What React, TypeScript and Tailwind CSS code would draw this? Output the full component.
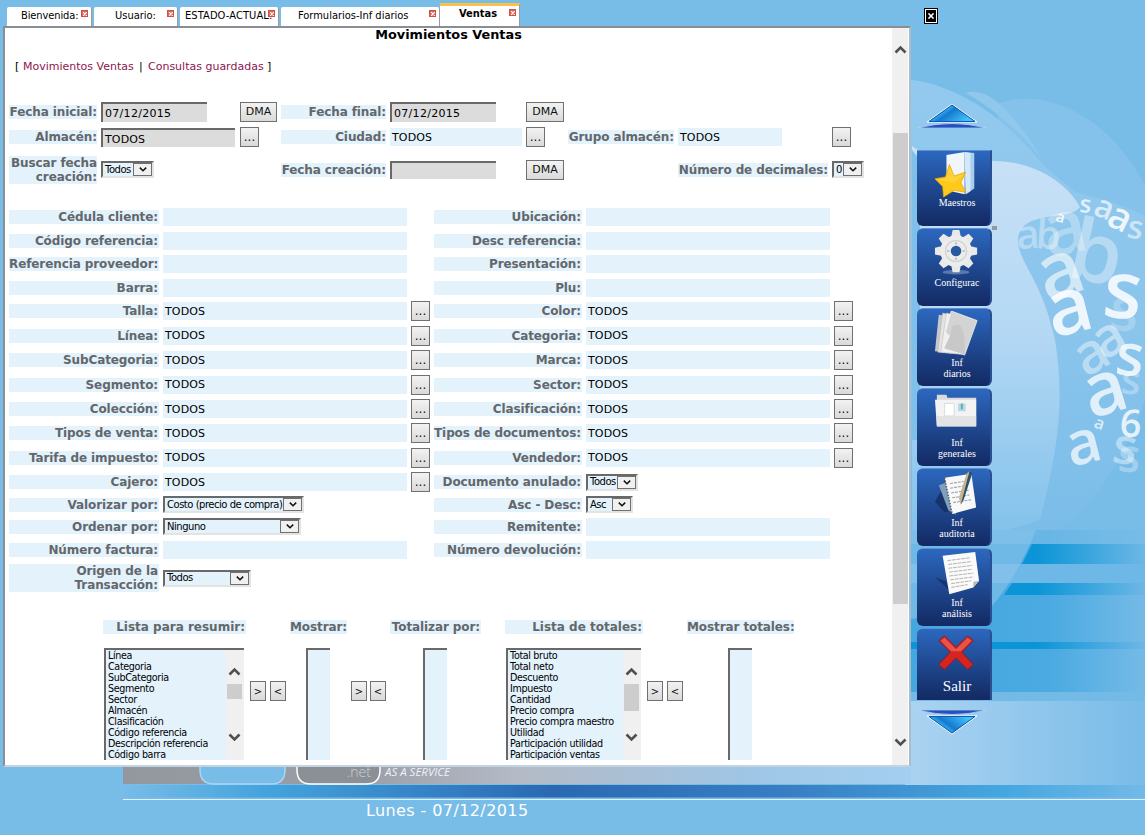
import React from "react";

const LABEL =
  "bg-[#e4f2fc] text-right text-[12px] leading-[14px] font-bold text-[#62676b] whitespace-pre shrink-0";
const FIELD = "bg-[#e4f2fc] text-[11px] tracking-[0.15px] pt-[2px] pl-[2px] text-black shrink-0 flex items-center";
const SUNKEN = "border-t-2 border-l-2 border-[#696969]";
const INPUT_TEXT = "bg-[#dcdcdc] pl-[2px] text-[11px] leading-[14px] shrink-0";

const Gap = ({ className }: { className: string }) => <div className={`shrink-0 ${className}`} />;

const Btn = ({ children, className }: { children: React.ReactNode; className: string }) => (
  <button
    className={`shrink-0 border border-[#707070] bg-linear-to-b from-[#f2f2f2] to-[#dadada] text-[#111] flex items-center justify-center ${className}`}
  >
    {children}
  </button>
);

const Dots = () => (
  <Btn className="h-[20px] w-[19px] text-[12px]">
    <span className="leading-[12px]">...</span>
  </Btn>
);
const Dma = ({ className }: { className: string }) => (
  <Btn className={`h-[20px] text-[11px] ${className}`}>
    <span className="leading-[12px]">DMA</span>
  </Btn>
);

const Chevron = ({ className, up }: { className: string; up?: boolean }) => (
  <svg className={className} viewBox="0 0 12 9" fill="none">
    <path d={up ? "M1 7.5 L6 2.5 L11 7.5" : "M1 1.5 L6 6.5 L11 1.5"} stroke="#505050" strokeWidth="2.6" />
  </svg>
);

const Select = ({ text, className }: { text: string; className: string }) => (
  <div
    className={`h-[17px] shrink-0 border-t-2 border-l-2 border-r-2 border-b-2 border-t-[#696969] border-l-[#696969] border-r-[#e3e3e3] border-b-[#e3e3e3] bg-[#e4f2fc] flex items-center justify-between ${className}`}
  >
    <span className="w-0 pl-[2px] text-[10px] leading-[12px] tracking-[-0.48px] whitespace-nowrap">{text}</span>
    <span className="flex h-[13px] w-[19px] shrink-0 items-center justify-center border border-[#707070] bg-[#f0f0f0]">
      <svg className="h-[5px] w-[8px]" viewBox="0 0 8 5" fill="none">
        <path d="M0.8 0.6 L4 3.8 L7.2 0.6" stroke="#111" strokeWidth="1.5" />
      </svg>
    </span>
  </div>
);

type Cell = { label: string; kind: "empty" | "todos" | "select"; value?: string; width?: string };
type Row = { h: string; left: Cell; right?: Cell };

const rows: Row[] = [
  { h: "h-[24px]", left: { label: "Cédula cliente:", kind: "empty" }, right: { label: "Ubicación:", kind: "empty" } },
  { h: "h-[23px]", left: { label: "Código referencia:", kind: "empty" }, right: { label: "Desc referencia:", kind: "empty" } },
  { h: "h-[24px]", left: { label: "Referencia proveedor:", kind: "empty" }, right: { label: "Presentación:", kind: "empty" } },
  { h: "h-[23px]", left: { label: "Barra:", kind: "empty" }, right: { label: "Plu:", kind: "empty" } },
  { h: "h-[24px]", left: { label: "Talla:", kind: "todos" }, right: { label: "Color:", kind: "todos" } },
  { h: "h-[25px]", left: { label: "Línea:", kind: "todos" }, right: { label: "Categoria:", kind: "todos" } },
  { h: "h-[24px]", left: { label: "SubCategoria:", kind: "todos" }, right: { label: "Marca:", kind: "todos" } },
  { h: "h-[25px]", left: { label: "Segmento:", kind: "todos" }, right: { label: "Sector:", kind: "todos" } },
  { h: "h-[24px]", left: { label: "Colección:", kind: "todos" }, right: { label: "Clasificación:", kind: "todos" } },
  { h: "h-[24px]", left: { label: "Tipos de venta:", kind: "todos" }, right: { label: "Tipos de documentos:", kind: "todos" } },
  { h: "h-[25px]", left: { label: "Tarifa de impuesto:", kind: "todos" }, right: { label: "Vendedor:", kind: "todos" } },
  {
    h: "h-[24px]",
    left: { label: "Cajero:", kind: "todos" },
    right: { label: "Documento anulado:", kind: "select", value: "Todos", width: "w-[52px]" },
  },
  {
    h: "h-[21px]",
    left: { label: "Valorizar por:", kind: "select", value: "Costo (precio de compra)", width: "w-[141px]" },
    right: { label: "Asc - Desc:", kind: "select", value: "Asc", width: "w-[47px]" },
  },
  {
    h: "h-[23px]",
    left: { label: "Ordenar por:", kind: "select", value: "Ninguno", width: "w-[138px]" },
    right: { label: "Remitente:", kind: "empty" },
  },
  { h: "h-[24px]", left: { label: "Número factura:", kind: "empty" }, right: { label: "Número devolución:", kind: "empty" } },
  { h: "h-[32px]", left: { label: "Origen de la\nTransacción:", kind: "select", value: "Todos", width: "w-[88px]" } },
];

const CellView = ({ cell, labelWidth }: { cell: Cell; labelWidth: string }) => (
  <div className="flex items-center">
    <div className={`${LABEL} ${labelWidth} pr-[1px] tracking-[-0.1px]`}>{cell.label}</div>
    <Gap className="w-[4px]" />
    {cell.kind === "select" ? (
      <Select text={cell.value ?? ""} className={cell.width ?? ""} />
    ) : (
      <>
        <div className={`${FIELD} h-[18px] w-[244px]`}>{cell.kind === "todos" ? "TODOS" : ""}</div>
        <Gap className="w-[4px]" />
        {cell.kind === "todos" && <Dots />}
      </>
    )}
  </div>
);

const ListBox = ({
  items,
  className,
  thumb,
}: {
  items: string[];
  className: string;
  thumb?: string;
}) => (
  <div className={`flex h-[112px] shrink-0 overflow-hidden bg-[#e4f2fc] ${SUNKEN} ${className}`}>
    <div className="flex-1 pl-[2px]">
      {items.map((t) => (
        <div key={t} className="h-[11px] text-[9.6px] leading-[11px] tracking-[-0.35px] whitespace-nowrap">
          {t}
        </div>
      ))}
    </div>
    {thumb && (
      <div className="flex w-[18px] shrink-0 flex-col items-center bg-[#f0f0f0] pr-[1px]">
        <Chevron up className="mt-[17px] h-[9px] w-[13px]" />
        <div className="mt-[8px] h-[43px] w-[15px] shrink-0">
          <div className={`w-full bg-[#cdcdcd] ${thumb}`} />
        </div>
        <Chevron className="mt-[6px] h-[9px] w-[13px]" />
      </div>
    )}
  </div>
);

const Arrows = ({ gap }: { gap: string }) => (
  <div className={`mt-[33px] flex shrink-0 ${gap}`}>
    <Btn className="h-[20px] w-[16px] text-[10px]">&gt;</Btn>
    <Btn className="h-[20px] w-[16px] text-[10px]">&lt;</Btn>
  </div>
);

const TabClose = () => (
  <span className="absolute top-[3px] right-[3px] flex h-[7px] w-[7px] items-center justify-center border border-[#cf5044] bg-[#dd6a5e]">
    <svg className="h-[4px] w-[4px]" viewBox="0 0 4 4">
      <path d="M0 0 L4 4 M4 0 L0 4" stroke="#fff" strokeWidth="1.2" />
    </svg>
  </span>
);

const Tab = ({ text, className }: { text: string; className: string }) => (
  <div
    className={`relative flex h-[19px] shrink-0 items-center rounded-t-[2px] border-r border-r-[#9a9a9a] bg-white text-[11px] whitespace-nowrap ${className}`}
  >
    {text}
    <TabClose />
  </div>
);

const Letter = ({ x, y, s, r, o, c }: { x: number; y: number; s: number; r: number; o: number; c: string }) => (
  <text
    transform={`translate(${x} ${y}) rotate(${r})`}
    fontSize={s}
    opacity={o}
    fill="#fff"
    fontFamily="Open Sans, sans-serif"
    fontWeight="600"
  >
    {c}
  </text>
);

const Backdrop = () => (
  <svg className="absolute inset-0 h-[835px] w-[1145px]" viewBox="0 0 1145 835">
    <defs>
      <linearGradient id="pale" x1="0" y1="0" x2="0" y2="1">
        <stop offset="0" stopColor="#c9e1f6" />
        <stop offset="0.45" stopColor="#b4d8f4" />
        <stop offset="1" stopColor="#7cbfea" />
      </linearGradient>
      <linearGradient id="haze" x1="0" y1="0" x2="0" y2="1">
        <stop offset="0" stopColor="#93c9ee" />
        <stop offset="0.5" stopColor="#8bc5ec" />
        <stop offset="1" stopColor="#78bce8" />
      </linearGradient>
      <linearGradient id="fade" x1="0" x2="1">
        <stop offset="0" stopColor="#45a7e0" />
        <stop offset="0.6" stopColor="#4aaae1" />
        <stop offset="1" stopColor="#75bae7" />
      </linearGradient>
      <linearGradient id="deep" gradientUnits="userSpaceOnUse" x1="905" y1="0" x2="1145" y2="0">
        <stop offset="0" stopColor="#0b95d6" />
        <stop offset="0.55" stopColor="#0b95d6" />
        <stop offset="1" stopColor="#6db7e6" />
      </linearGradient>
      <linearGradient id="floor" x1="0" x2="1">
        <stop offset="0" stopColor="#acd3f1" />
        <stop offset="1" stopColor="#78bce8" />
      </linearGradient>
      <linearGradient id="grey" x1="0" x2="1">
        <stop offset="0" stopColor="#93989e" />
        <stop offset="0.3" stopColor="#9a9ea7" />
        <stop offset="0.5" stopColor="#b4bac6" />
        <stop offset="0.8" stopColor="#9fc6e6" />
        <stop offset="1" stopColor="#a4cff0" />
      </linearGradient>
      <linearGradient id="stripe" x1="0" x2="1">
        <stop offset="0" stopColor="#78bce8" />
        <stop offset="0.14" stopColor="#44a3dc" />
        <stop offset="0.42" stopColor="#2a69b2" />
        <stop offset="0.65" stopColor="#387ec2" />
        <stop offset="0.86" stopColor="#45a7e0" />
        <stop offset="1" stopColor="#72b9e7" />
      </linearGradient>
    </defs>
    <rect width="1145" height="835" fill="#78bce8" />
    <path d="M1000 103 C1040 88 1105 110 1145 185 L1145 240 L980 240 Z" fill="#84c2eb" />
    <path d="M905 79 C960 84 1010 122 1045 167 L1075 192 C1100 198 1130 208 1145 216 L1145 400 C1110 500 1060 540 1000 560 L905 560 Z" fill="url(#haze)" />
    <path d="M965 93 C980 88 995 98 1006 110 C1025 130 1036 148 1045 165 C1030 140 990 105 965 93Z" fill="#8fc7ed" />
    <path d="M912 146 C940 165 960 160 990 161 C1030 160 1065 180 1080 207 C1070 222 1018 208 1018 242 C1020 265 1042 280 1055 340 C1065 400 1058 450 1040 520 L912 560 Z" fill="url(#pale)" />
    <path d="M912 150 L920 160 L920 440 L912 440Z" fill="#7fc0ea" />
    <g>
      <rect x="905" y="530" width="240" height="170" fill="url(#fade)" />
      <rect x="905" y="530" width="240" height="14" fill="#7abde8" opacity=".65" />
      <path d="M1032 544 H1145 V564 H1022Z" fill="url(#deep)" />
      <rect x="905" y="564" width="240" height="19" fill="#6db8e7" />
      <path d="M1012 583 H1145 V595 H1004Z" fill="url(#deep)" />
      <rect x="905" y="642" width="240" height="7" fill="url(#deep)" />
      <path d="M905 530 H1036 C1024 560 1010 585 992 606 L905 620Z" fill="#8fc7ed" opacity=".55" />
      <rect x="905" y="692" width="240" height="9" fill="#74bae6" />
      <rect x="905" y="701" width="240" height="84" fill="url(#floor)" />
    </g>
    <Letter x={1017} y={249} s={40} r={-3} o={0.35} c="a" />
    <Letter x={1035} y={248} s={40} r={4} o={0.35} c="b" />
    <Letter x={1065} y={276} s={84} r={12} o={0.36} c="b" />
    <Letter x={1048} y={258} s={76} r={-12} o={0.3} c="a" />
    <Letter x={1055} y={221} s={15} r={15} o={0.85} c="a" />
    <Letter x={1079} y={212} s={24} r={5} o={0.75} c="s" />
    <Letter x={1092} y={214} s={32} r={22} o={0.65} c="a" />
    <Letter x={1105} y={224} s={38} r={26} o={0.85} c="a" />
    <Letter x={1126} y={237} s={32} r={10} o={0.55} c="s" />
    <Letter x={1047} y={303} s={78} r={-20} o={0.6} c="a" />
    <Letter x={1053} y={338} s={78} r={-14} o={0.85} c="a" />
    <Letter x={1101} y={316} s={80} r={6} o={0.85} c="s" />
    <Letter x={1108} y={329} s={60} r={6} o={0.22} c="s" />
    <Letter x={1086} y={378} s={56} r={-30} o={0.42} c="a" />
    <Letter x={1104} y={361} s={54} r={-30} o={0.45} c="a" />
    <Letter x={1114} y={374} s={58} r={6} o={0.8} c="s" />
    <Letter x={1120} y={393} s={40} r={6} o={0.3} c="s" />
    <Letter x={1091} y={419} s={74} r={-17} o={0.75} c="a" />
    <Letter x={1119} y={436} s={38} r={4} o={0.8} c="6" />
    <Letter x={1093} y={427} s={17} r={20} o={0.7} c="a" />
    <Letter x={1071} y={467} s={60} r={-14} o={0.7} c="a" />
    <Letter x={1111} y={462} s={50} r={8} o={0.42} c="s" />
    <Letter x={1117} y={471} s={46} r={4} o={0.3} c="s" />
    <rect x="123" y="760" width="788" height="24" fill="url(#grey)" />
    <path d="M200 760 V770 Q200 784 214 784 H271 Q285 784 285 770 V760" fill="#78bce8" stroke="#a9d6f5" strokeWidth="1.5" />
    <path d="M297 760 V770 Q297 784 311 784 H366 Q380 784 380 770 V760" fill="#8b9096" stroke="#fff" strokeWidth="1.5" />
    <text x="347" y="777" fontSize="14" fill="#c9d0d8" fontFamily="Open Sans, sans-serif" fontWeight="300">.net</text>
    <text x="385" y="775.5" fontSize="10" fill="#eef2f6" fontStyle="italic" fontFamily="Open Sans, sans-serif" textLength="65" lengthAdjust="spacingAndGlyphs">AS A SERVICE</text>
    <rect x="123" y="785" width="1022" height="12.5" fill="url(#stripe)" />
    <rect x="123" y="799" width="1022" height="1" fill="#e2f1fb" />
  </svg>
);

const icons = {
  star: (
    <>
      <path d="M12 3 L31 0 V44 L12 40Z" fill="#f1f6fb" />
      <path d="M31 0 L41 1 V38 L32 44Z" fill="#a9cfee" />
      <path d="M31 0 L37 1 V41 L32 44Z" fill="#d3e8f8" />
      <path d="M15 13 L20 25 L32 21 L27 32 L32 42 L20 40 L9 47 L8 36 L0 28 L11 26Z" fill="#ffc91c" stroke="#eaa400" strokeWidth=".8" />
      <path d="M15 15 L20 26 L30 23 L20 32 L3 29 L12 27Z" fill="#ffd338" />
    </>
  ),
  gear: (
    <>
      <ellipse cx="22" cy="44" rx="14" ry="2.5" fill="#7f9cc8" opacity=".6" />
      {[0, 45, 90, 135].map((a) => (
        <path key={a} d="M18.5 0 H25.5 L27.5 9 H16.5Z M16.5 35 H27.5 L25.5 44 H18.5Z" fill="#e9e9e9" transform={`rotate(${a} 22 22)`} />
      ))}
      <circle cx="22" cy="22" r="16.5" fill="#ececec" />
      <circle cx="22" cy="22" r="11" fill="none" stroke="#d2d2d2" strokeWidth="1.3" />
      <circle cx="22" cy="22" r="5.5" fill="#28589f" />
      <path d="M22 13 v2 M22 29 v2 M13 22 h2 M29 22 h2" stroke="#aaa" strokeWidth="1.5" />
    </>
  ),
  files: (
    <>
      <path d="M4 4 L30 8 L24 44 L0 42Z" fill="#c9c9c9" />
      <path d="M8 2 L34 8 L26 45 L3 43Z" fill="#e4e4e4" stroke="#b5b5b5" strokeWidth=".5" />
      <path d="M12 2 L38 8 L28 45 L6 43Z" fill="#f0f0f0" stroke="#b5b5b5" strokeWidth=".5" />
      <path d="M17 0 L44 10 L31 46 L9 39 L15 26 L11 22Z" fill="#d3d3d3" stroke="#f5f5f5" strokeWidth=".8" />
      <path d="M18 16 Q32 6 31 45 L10 39 L16 26Z" fill="#c2c2c2" opacity=".6" />
    </>
  ),
  folder: (
    <>
      <path d="M2 4 H12 L13 7 H43 V36 H2Z" fill="#dadada" />
      <path d="M0 9 H43 V37 H2Z" fill="#f3f3f3" />
      <path d="M10 13 H20 V26 H10Z" fill="#fff" stroke="#d0d5da" strokeWidth=".8" />
      <path d="M24 13 H32 V21 H24Z" fill="#b4dbe4" />
      <path d="M27 13 h2 v6 h-2z" fill="#63a8bd" />
      <path d="M1 26 H43 V37 H2Z" fill="#d8d8d8" opacity=".6" />
    </>
  ),
  notes: (
    <>
      <path d="M0 33 L12 12 L20 42 L10 44Z" fill="#152e62" opacity=".8" />
      <path d="M4 16 L12 13 L22 47 L14 42Z" fill="#7fa0bd" />
      <path d="M10 8 L38 4 L43 39 L18 46Z" fill="#f8f8f8" />
      <path d="M10 8 L18 46" stroke="#555" strokeWidth="1.6" strokeDasharray="1.4 1.6" />
      <path d="M16 14 L30 12 M16 19 L34 16 M17 24 L35 21 M18 29 L36 26 M19 34 L38 31" stroke="#98a0a8" strokeWidth="1.1" strokeDasharray="3 1" />
      <path d="M36 1 L39 3 L30 31 L27 36 L27 29Z" fill="#2c5270" />
      <path d="M36 1 L33 4 L25 29 L27 36Z" fill="#c8b48a" />
    </>
  ),
  page: (
    <>
      <path d="M0 26 L12 31 L15 40 Z" fill="#152e62" opacity=".8" />
      <path d="M8 4 L42 0 L46 30 L40 37 L15 44Z" fill="#fafafa" />
      <path d="M40 37 L40 31 L46 30Z" fill="#b9b9b9" />
      <path d="M13 9 L37 6 M14 13 L38 10 M14 17 L39 14 M15 21 L39 18 M15 25 L40 22 M16 29 L40 26 M17 33 L38 30 M17 37 L34 34" stroke="#b0b0b0" strokeWidth="1" strokeDasharray="4 .8" />
    </>
  ),
  exit: (
    <>
      <path d="M10 3 L22 15 L34 3 L40 8 L28 20 L40 33 L34 38 L22 26 L10 38 L4 33 L16 20 L4 8Z" fill="#d8241f" stroke="#8e1c20" strokeWidth="1" />
      <path d="M10 5 L22 17 L34 5 L38 8 L27 19 L17 19 L6 8Z" fill="#e8534e" />
    </>
  ),
};

const menu = [
  { icon: "star", text: "Maestros", box: "h-[76px] rounded-b-[6px] mb-[2px]", svg: "mt-[1px] -mb-[1px]", label: "text-[10px] leading-[11px]" },
  { icon: "gear", text: "Configurac", box: "h-[78px] rounded-[6px] mb-[2px]", svg: "mt-[1px] mb-[1px]", label: "text-[10px] leading-[11px]" },
  { icon: "files", text: "Inf\ndiarios", box: "h-[78px] rounded-[6px] mb-[2px]", svg: "mt-[2px] mb-0", label: "text-[10px] leading-[11px]" },
  { icon: "folder", text: "Inf\ngenerales", box: "h-[78px] rounded-[6px] mb-[2px]", svg: "mt-[2px] mb-0", label: "text-[10px] leading-[11px]" },
  { icon: "notes", text: "Inf\nauditoria", box: "h-[78px] rounded-[6px] mb-[2px]", svg: "mt-[1px] mb-[1px]", label: "text-[10px] leading-[11px]" },
  { icon: "page", text: "Inf\nanálisis", box: "h-[78px] rounded-[6px] mb-[2px]", svg: "mt-[3px] -mb-[1px]", label: "text-[10px] leading-[11px]" },
  { icon: "exit", text: "Salir", box: "h-[72px] rounded-t-[6px]", svg: "mt-[4px] -mb-[1px]", label: "text-[15px] leading-[16px]" },
] as const;

const TriangleButton = ({ down }: { down?: boolean }) => (
  <svg className="h-[25px] w-[70px] shrink-0" viewBox="0 0 70 25">
    <defs>
      <linearGradient id={down ? "tri-d" : "tri-u"} x1="0" x2="1" y1="0" y2="0.5">
        <stop offset="0" stopColor="#1c6ed2" />
        <stop offset="0.4" stopColor="#36b4f4" />
        <stop offset="0.55" stopColor="#1579d0" />
        <stop offset="1" stopColor="#42c3fa" />
      </linearGradient>
    </defs>
    <g transform={down ? "matrix(1 0 0 -1 0 25)" : undefined}>
      <path d="M35 1 L60 19 H10Z" fill={down ? "url(#tri-d)" : "url(#tri-u)"} stroke="#fff" strokeWidth="1" />
      <path d="M35 2 L58 18.5 H12Z" fill="none" stroke="#1558ae" strokeWidth="1" />
      <path d="M1 25 Q35 16 69 25Z" fill="#2450c0" stroke="#d9e9fa" strokeWidth=".6" />
    </g>
  </svg>
);

export default function App() {
  return (
    <div className="relative h-[835px] w-[1145px] overflow-hidden bg-[#78bce8] font-['DejaVu_Sans',sans-serif] text-black">
      <Backdrop />
      <div className="relative flex h-full">
        <div className="flex w-[912px] shrink-0 flex-col pl-[3px]">
          <div className="flex h-[26px] items-end pl-[4px] font-['DejaVu_Sans_Condensed','DejaVu_Sans',sans-serif] [font-stretch:condensed]">
            <Tab text="Bienvenida:" className="w-[85px] pl-[14px] tracking-[-0.1px]" />
            <Gap className="w-[2px]" />
            <Tab text="Usuario:" className="w-[84px] pl-[21px]" />
            <Gap className="w-[2px]" />
            <Tab text="ESTADO-ACTUAL:" className="w-[99px] pl-[5px] tracking-[0.1px]" />
            <Gap className="w-[2px]" />
            <Tab text="Formularios-Inf diarios" className="w-[159px] pl-[17px]" />
            <div className="relative flex h-[23px] w-[80px] shrink-0 items-center border-t-[3px] border-r border-t-[#f9c04a] border-r-[#9a9a9a] bg-white pb-[4px] pl-[19px] text-[11px] font-bold">
              Ventas
              <TabClose />
            </div>
          </div>

          <div className="flex h-[741px] w-[908px] border-2 border-t-[#8a8d92] border-r-[#a9bccb] border-b-[#c3d3e0] border-l-[#8a8d92] bg-white">
            <main className="flex h-full w-[887px] shrink-0 flex-col overflow-hidden pl-[4px]">
              <h1 className="h-[16px] pr-[4px] text-center text-[12.85px] leading-[14px] font-bold">Movimientos Ventas</h1>
              <nav className="mt-[16px] flex h-[14px] pl-[6px] text-[11px] leading-[14px] whitespace-nowrap">
                <span className="w-[8px]">[</span>
                <a className="w-[116px] text-[#8e1650]">Movimientos Ventas</a>
                <span className="w-[9px]">|</span>
                <a className="w-[119px] text-[#8e1650]">Consultas guardadas</a>
                <span>]</span>
              </nav>

              <div className="mt-[28px] flex h-[20px] items-center">
                <div className={`${LABEL} w-[88px] tracking-[-0.1px]`}>Fecha inicial:</div>
                <Gap className="w-[4px]" />
                <div className={`${SUNKEN} ${INPUT_TEXT} h-[20px] w-[106px] pt-[3px] tracking-[0.3px]`}>07/12/2015</div>
                <Gap className="w-[33px]" />
                <Dma className="w-[37px]" />
                <Gap className="w-[4px]" />
                <div className={`${LABEL} w-[105px] tracking-[-0.1px]`}>Fecha final:</div>
                <Gap className="w-[4px]" />
                <div className={`${SUNKEN} ${INPUT_TEXT} h-[20px] w-[106px] pt-[3px] tracking-[0.3px]`}>07/12/2015</div>
                <Gap className="w-[30px]" />
                <Dma className="w-[38px]" />
              </div>

              <div className="mt-[5px] flex h-[20px] items-center">
                <div className={`${LABEL} w-[88px] tracking-[-0.1px]`}>Almacén:</div>
                <Gap className="w-[4px]" />
                <div className={`${SUNKEN} ${INPUT_TEXT} h-[19px] w-[134px] pt-[3px] tracking-[0.15px]`}>TODOS</div>
                <Gap className="w-[5px]" />
                <Dots />
                <Gap className="w-[22px]" />
                <div className={`${LABEL} w-[105px] tracking-[-0.1px]`}>Ciudad:</div>
                <Gap className="w-[4px]" />
                <div className={`${FIELD} h-[18px] w-[132px]`}>TODOS</div>
                <Gap className="w-[4px]" />
                <Dots />
                <Gap className="w-[23px]" />
                <div className={`${LABEL} w-[106px] tracking-[-0.1px]`}>Grupo almacén:</div>
                <Gap className="w-[4px]" />
                <div className={`${FIELD} h-[18px] w-[104px]`}>TODOS</div>
                <Gap className="w-[50px]" />
                <Dots />
              </div>

              <div className="mt-[8px] flex h-[29px] items-center">
                <div className={`${LABEL} w-[88px] tracking-[-0.1px]`}>
                  Buscar fecha
                  <br />
                  creación:
                </div>
                <Gap className="w-[4px]" />
                <Select text="Todos" className="w-[53px]" />
                <Gap className="w-[127px]" />
                <div className={`${LABEL} w-[105px] tracking-[-0.1px]`}>Fecha creación:</div>
                <Gap className="w-[4px]" />
                <div className={`${SUNKEN} h-[18px] w-[106px] shrink-0 bg-[#dcdcdc]`} />
                <Gap className="w-[30px]" />
                <Dma className="w-[38px]" />
                <Gap className="w-[114px]" />
                <div className={`${LABEL} w-[150px] tracking-[-0.1px]`}>Número de decimales:</div>
                <Gap className="w-[4px]" />
                <Select text="0" className="w-[32px]" />
              </div>

              <div className="mt-[21px] flex flex-col">
                {rows.map((r) => (
                  <div key={r.left.label} className={`flex items-center ${r.h}`}>
                    <div className="w-[425px] shrink-0">
                      <CellView cell={r.left} labelWidth="w-[150px]" />
                    </div>
                    {r.right && <CellView cell={r.right} labelWidth="w-[148px]" />}
                  </div>
                ))}
              </div>

              <div className="mt-[26px] flex h-[14px] items-start pl-[94px]">
                <div className={`${LABEL} w-[143px] pr-[1px]`}>Lista para resumir:</div>
                <Gap className="w-[44px]" />
                <div className={`${LABEL} w-[57px] pr-[1px] tracking-[-0.1px]`}>Mostrar:</div>
                <Gap className="w-[43px]" />
                <div className={`${LABEL} w-[91px] pr-[1px] tracking-[-0.1px]`}>Totalizar por:</div>
                <Gap className="w-[24px]" />
                <div className={`${LABEL} w-[138px] pr-[1px]`}>Lista de totales:</div>
                <Gap className="w-[44px]" />
                <div className={`${LABEL} w-[107px] pr-[1px] tracking-[-0.1px]`}>Mostrar totales:</div>
              </div>

              <div className="mt-[14px] flex items-start pl-[95px]">
                <ListBox
                  className="w-[140px]"
                  thumb="h-[15px]"
                  items={[
                    "Línea",
                    "Categoria",
                    "SubCategoria",
                    "Segmento",
                    "Sector",
                    "Almacén",
                    "Clasificación",
                    "Código referencia",
                    "Descripción referencia",
                    "Código barra",
                  ]}
                />
                <Gap className="w-[6px]" />
                <Arrows gap="gap-[4px]" />
                <Gap className="w-[20px]" />
                <ListBox className="w-[24px]" items={[]} />
                <Gap className="w-[21px]" />
                <Arrows gap="gap-[3px]" />
                <Gap className="w-[37px]" />
                <ListBox className="w-[24px]" items={[]} />
                <Gap className="w-[59px]" />
                <ListBox
                  className="w-[135px]"
                  thumb="h-[27px]"
                  items={[
                    "Total bruto",
                    "Total neto",
                    "Descuento",
                    "Impuesto",
                    "Cantidad",
                    "Precio compra",
                    "Precio compra maestro",
                    "Utilidad",
                    "Participación utilidad",
                    "Participación ventas",
                  ]}
                />
                <Gap className="w-[6px]" />
                <Arrows gap="gap-[4px]" />
                <Gap className="w-[45px]" />
                <ListBox className="w-[24px]" items={[]} />
              </div>
            </main>
            <div className="flex h-full w-[16px] shrink-0 flex-col items-center bg-[#f0f0f0]">
              <Chevron up className="mt-[17px] h-[9px] w-[13px] shrink-0" />
              <div className="mt-[79px] h-[471px] w-[15px] shrink-0 bg-[#cdcdcd]" />
              <Chevron className="mt-[134px] h-[9px] w-[13px] shrink-0" />
            </div>
          </div>

          <div className="mt-[34px] pl-[363px] text-[16px] leading-[20px] tracking-[0.4px] whitespace-nowrap text-white">
            Lunes - 07/12/2015
          </div>
        </div>

        <aside className="flex w-[85px] shrink-0 flex-col pl-[5px]">
          <div className="mt-[8px] ml-[7px] flex h-[16px] w-[14px] items-center justify-center border border-black bg-white">
            <div className="flex h-[12px] w-[10px] items-center justify-center bg-black">
              <svg className="h-[6px] w-[6px]" viewBox="0 0 7 7">
                <path d="M0.5 0.5 L6.5 6.5 M6.5 0.5 L0.5 6.5" stroke="#fff" strokeWidth="1.8" />
              </svg>
            </div>
          </div>
          <div className="mt-[79px] h-[25px]">
            <TriangleButton />
          </div>
          <div className="mt-[22px] flex flex-col">
            {menu.map((m) => (
              <div
                key={m.icon}
                className={`flex w-[75px] shrink-0 flex-col items-center overflow-hidden border-t border-r-2 border-t-[#5f8fd2] border-r-[#2a4f92] bg-linear-to-b from-[#2c68bf] to-[#132a63] pl-[7px] ${m.box}`}
              >
                <svg className={`h-[46px] w-[46px] shrink-0 ${m.svg}`} viewBox="0 0 46 48">
                  {icons[m.icon]}
                </svg>
                <span
                  className={`text-center font-['Liberation_Serif',serif] whitespace-pre-line text-white ${m.label}`}
                >
                  {m.text}
                </span>
              </div>
            ))}
          </div>
          <div className="mt-[10px] h-[25px]">
            <TriangleButton down />
          </div>
        </aside>
        <div className="mt-[226px] -ml-[5px] h-[4px] w-[5px] bg-[#8f9aa5]" />
      </div>
    </div>
  );
}
